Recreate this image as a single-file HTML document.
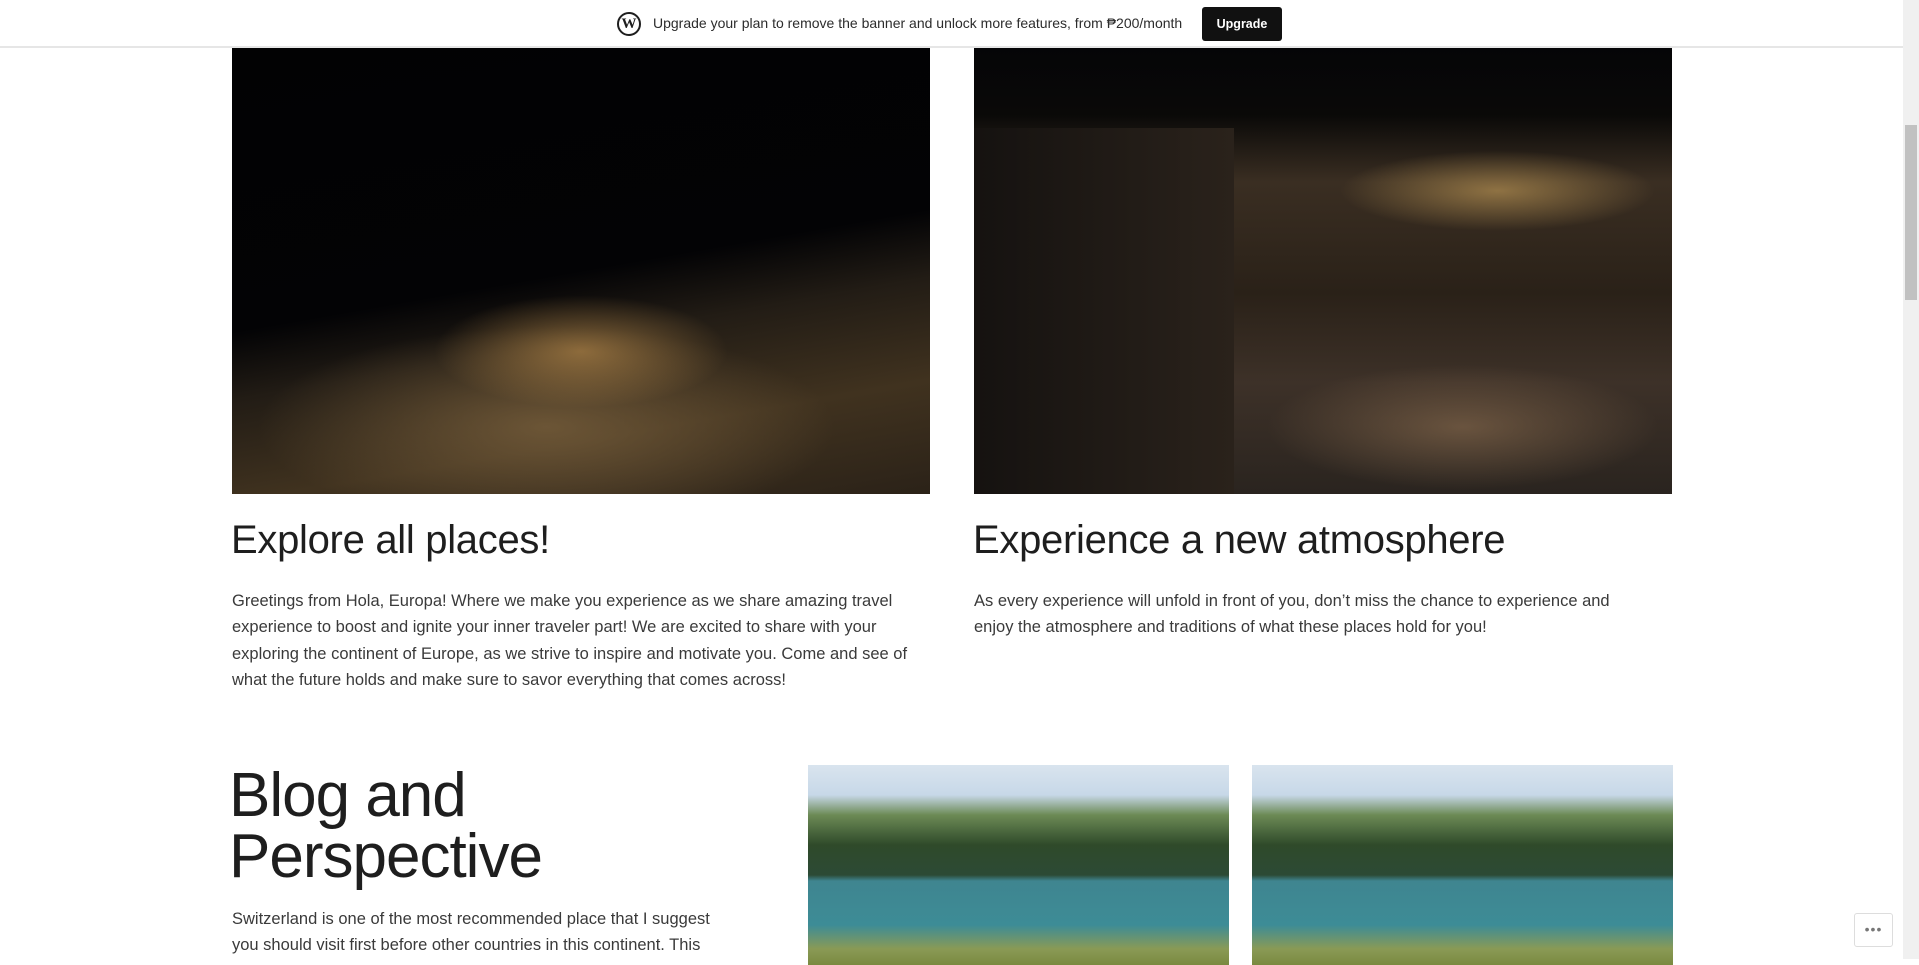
<!DOCTYPE html>
<html><head><meta charset="utf-8"><style>
*{margin:0;padding:0;box-sizing:border-box}
html,body{width:1919px;height:959px;overflow:hidden;background:#fff;font-family:"Liberation Sans",Arial,sans-serif;color:#1e1e1e}
.banner{position:absolute;left:0;top:0;width:1903px;height:48px;background:#fff;border-bottom:2px solid #e6e6e6;z-index:5}
.banner .txt{position:absolute;left:653px;top:15px;font-size:14px;color:#2c2c2c}
.banner .wp{position:absolute;left:617px;top:12px;width:24px;height:24px;border:2px solid #1e1e1e;border-radius:50%;font:bold 15px "Liberation Serif",serif;text-align:center;line-height:20px}
.banner .btn{position:absolute;left:1202px;top:7px;width:80px;height:34px;background:#111;border-radius:3px;color:#fff;font-size:12.5px;font-weight:bold;text-align:center;line-height:34px}
.sb{position:absolute;left:1903px;top:0;width:16px;height:959px;background:#f0f0f0}
.sb .th{position:absolute;left:2px;top:125px;width:12px;height:175px;background:#c1c1c1}
.img{position:absolute;overflow:hidden}
.n1{left:232px;top:48px;width:698px;height:446px;background:
radial-gradient(ellipse 30% 18% at 50% 68%,rgba(200,150,80,.6),transparent 70%),
radial-gradient(ellipse 55% 30% at 45% 85%,rgba(120,95,60,.8),transparent 75%),
linear-gradient(170deg,#020203 0%,#030305 50%,#221c15 62%,#40321f 80%,#2b2218 100%)}
.n2{left:974px;top:48px;width:698px;height:446px;background:
radial-gradient(ellipse 30% 12% at 75% 32%,rgba(200,160,90,.6),transparent 75%),
radial-gradient(ellipse 40% 20% at 70% 85%,rgba(140,110,80,.6),transparent 70%),
linear-gradient(180deg,#050507 0%,#0a0908 15%,#3a2e22 30%,#2a2118 55%,#3d3128 75%,#2a241f 100%)}
.n2 .wall{position:absolute;left:0;top:80px;width:260px;height:366px;background:linear-gradient(90deg,#151210,#2a221b)}
.lake{top:765px;width:421px;height:200px;background:
linear-gradient(180deg,#d9e4ee 0%,#c7d8e8 15%,#6c8a55 25%,#2f4a2a 40%,#2c4a35 55%,#3f8590 58%,#3d8c96 80%,#8a9a55 92%,#7a8a40 100%)}
.l1{left:808px}.l2{left:1252px}
h2{position:absolute;font-weight:normal;font-size:40px;letter-spacing:-.3px;color:#1e1e1e}
p{position:absolute;font-size:16.5px;line-height:26.3px;color:#3a3a3a}
h1{position:absolute;font-weight:normal;font-size:62px;line-height:61px;letter-spacing:-1px;color:#1e1e1e}
.dots{position:absolute;left:1854px;top:913px;width:39px;height:34px;border:1px solid #ddd;border-radius:3px;background:#fff;text-align:center;font-size:14px;color:#777;line-height:30px;letter-spacing:1px}
</style></head><body>
<div class="banner"><div class="wp">W</div><div class="txt">Upgrade your plan to remove the banner and unlock more features, from ₱200/month</div><div class="btn">Upgrade</div></div>
<div class="img n1"></div>
<div class="img n2"><div class="wall"></div></div>
<h2 style="left:231px;top:518px">Explore all places!</h2>
<h2 style="left:973px;top:518px">Experience a new atmosphere</h2>
<p style="left:232px;top:588px;width:710px">Greetings from Hola, Europa! Where we make you experience as we share amazing travel experience to boost and ignite your inner traveler part! We are excited to share with your exploring the continent of Europe, as we strive to inspire and motivate you. Come and see of what the future holds and make sure to savor everything that comes across!</p>
<p style="left:974px;top:588px;width:670px">As every experience will unfold in front of you, don’t miss the chance to experience and enjoy the atmosphere and traditions of what these places hold for you!</p>
<h1 style="left:229px;top:765px">Blog and<br>Perspective</h1>
<p style="left:232px;top:906px;width:500px">Switzerland is one of the most recommended place that I suggest you should visit first before other countries in this continent. This</p>
<div class="img lake l1"></div>
<div class="img lake l2"></div>
<div class="dots">•••</div>
<div class="sb"><div class="th"></div></div>
</body></html>
